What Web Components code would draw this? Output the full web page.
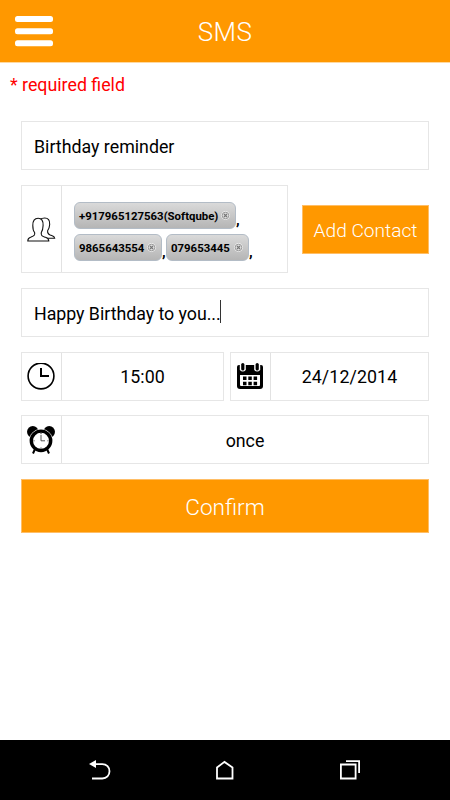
<!DOCTYPE html>
<html lang="en"><head><meta charset="utf-8"><title>SMS</title>
<style>html,body{margin:0;height:100%;background:#fff;overflow:hidden}</style></head>
<body><sms-app></sms-app>
<script>
const define=(name,html)=>{
  const t=document.createElement('template');t.innerHTML=html;
  customElements.define(name,class extends HTMLElement{
    constructor(){super();this.attachShadow({mode:'open'}).append(t.content.cloneNode(true));}
  });
};
define('app-bar',`<style>
:host{display:grid;grid-template-columns:1fr auto 1fr;align-items:center;background:#ff9800;border-bottom:1px solid #ffd9a0;box-sizing:border-box;height:63px;color:#fff;font-size:26px;font-weight:300}
svg{margin-left:14px;display:block}.t{letter-spacing:.4px;padding-top:1px}</style>
<svg width="40" height="62" viewBox="14 0 40 62" fill="#fff"><rect x="15" y="16" width="38" height="6" rx="2.5"/><rect x="15" y="28.2" width="38" height="6" rx="2.5"/><rect x="15" y="40.2" width="38" height="6" rx="2.5"/></svg>
<span class="t"><slot></slot></span><span></span>`);
define('field-box',`<style>
:host{display:flex;box-sizing:border-box;border:1.5px solid #e6e6e6;height:49px;min-width:0;font-size:17.8px;color:#000}
.i{width:39px;flex:none;border-right:1px solid #e2e2e2;display:grid;place-items:center start}
::slotted(svg){margin-left:5px}
:host([plain]) .i{display:none}
.b{flex:1;display:flex;align-items:center;justify-content:center;padding-top:2px}
:host([plain]) .b{justify-content:flex-start;padding-left:12px}
:host([tall]){height:88px}:host([tall]) .b{padding:5px 0 0 12px;justify-content:flex-start}
</style><div class="i"><slot name="icon"></slot></div><div class="b"><slot></slot></div>`);
define('action-button',`<style>
:host{display:flex;align-items:center;justify-content:center;box-sizing:border-box;background:#ff9800;border:1px solid #ffbe66;color:#fff;font-weight:300}
span{padding-top:2px}</style><span><slot></slot></span>`);
define('contact-chip',`<style>
:host{display:inline-flex;box-sizing:border-box;height:27px;align-items:center;justify-content:space-between;padding:0 5px 0 4px;border:1px solid #b3bcc6;border-radius:6px;background:linear-gradient(#dadada,#b5b5b5);font-size:11.4px;font-weight:700;color:#000}
span{padding-top:1px}svg{flex:none}</style><span><slot></slot></span>
<svg width="9" height="9" viewBox="0 0 9 9"><circle cx="4.5" cy="4.5" r="4.4" fill="#eee"/><circle cx="4.5" cy="4.5" r="3.3" fill="#ddd" stroke="#888" stroke-width=".8"/><path d="M3 3l3 3M6 3l-3 3" stroke="#777" stroke-width="1.1"/></svg>`);
define('nav-bar',`<style>
:host{display:flex;justify-content:space-between;align-items:center;height:60px;background:#000;padding:0 87px;box-sizing:border-box}
svg{display:block;fill:none;stroke:#fff;stroke-width:1.8}</style>
<svg width="26" height="24" viewBox="87 758 26 24"><path d="M92 778.5h10.3c4.3 0 7.2-3.1 7.2-7.2s-2.9-7.2-7.2-7.2H93"/><path d="M89 764l7-4v8z" fill="#fff" stroke="none"/></svg>
<svg width="26" height="24" viewBox="212 758 26 24"><path d="M217 778.5V767.5l7.5-5.6 8 5.6v11z"/></svg>
<svg width="26" height="24" viewBox="337 758 26 24"><path d="M340.9 764.5h14.7v14h-14.7zM346 761.2h13.1V773"/></svg>`);
define('sms-form',`<style>
:host{display:block;padding:9px 21px 0}
.req{margin-left:-11px;height:26px;line-height:26px;font-size:17.8px;color:#f00}
.grid{margin-top:23px;display:grid;grid-template-columns:minmax(0,1fr);row-gap:15px}
.r{display:flex;align-items:center}
.contacts{flex:none;width:267px}.add{width:127px;height:49px;margin-left:14px;font-size:19.1px}
.chips{display:grid;gap:5px;font-size:15px;font-weight:700}.line{display:flex;align-items:flex-end;height:27px}
.c{width:4px;line-height:20px;height:19px;overflow:visible}
.caret{width:1px;height:23px;background:#333;margin-left:-1px;margin-top:-4px}
.confirm{height:54px;font-size:22.6px}
svg{display:block}</style>
<div class="req">* required field</div>
<div class="grid">
<field-box plain><span>Birthday reminder</span></field-box>
<div class="r"><field-box tall class="contacts">
<svg slot="icon" width="30" height="28" viewBox="0 0 30 28" fill="#fff" stroke="#111" stroke-width="1.1"><path d="M13 4.5c1.3-1 3-1.500 4.700-1.500 3.500 0 5.200 2 5 6.500-.2 3-1 4.500-2 6-.5 2.500.3 3.500 2.500 4.500 2.500 1 4.300 1 4.500 3.300H14z"/><path d="M.8 26c0-2.300.8-3 2.700-3.700 3-1.200 4.900-1.700 4.100-4.800C6.300 16 5.800 13.500 5.800 10.500 5.600 5.800 7.600 3.200 11.100 3.200s5.300 2.600 5 7.300c-.1 3-.7 5.400-1.800 7-.8 3.100 1.200 3.700 4.100 4.800 2 .8 3.400 1.300 3.400 3.700z"/></svg>
<div class="chips"><div class="line"><contact-chip style="width:162px">+917965127563(Softqube)</contact-chip><span class="c">,</span></div>
<div class="line"><contact-chip style="width:88px">9865643554</contact-chip><span class="c">,</span><contact-chip style="width:83px">079653445</contact-chip><span class="c">,</span></div></div>
</field-box><action-button class="add">Add Contact</action-button></div>
<field-box plain><span style="letter-spacing:-.03px">Happy Birthday to you...</span><i class="caret"></i></field-box>
<div class="r" style="gap:6px"><field-box style="width:203px">
<svg slot="icon" width="28" height="28" viewBox="0 0 28 28" fill="none" stroke="#000"><circle cx="14" cy="13" r="12.9" stroke-width="1.6"/><path d="M14 5v8h8" stroke-width="2"/></svg><span style="margin-top:-2px">15:00</span></field-box>
<field-box style="flex:1"><svg slot="icon" width="28" height="28" viewBox="0 1 28 28"><path d="M1 5q0-2 2-2h22q2 0 2 2v19q0 3-3 3H4q-3 0-3-3z"/><path d="M4 13h20v10q0 1-1 1H5q-1 0-1-1z" fill="#fff"/><path d="M3.8 0h6v8q-3 3-6 0zM18.2 0h6v8q-3 3-6 0z" fill="#fff"/><rect x="5.2" y="1" width="3.2" height="7.5" rx="1.6"/><rect x="19.6" y="1" width="3.2" height="7.5" rx="1.6"/><path d="M7 14.5h3.5v3.5H7zM12.3 14.5h3.5v3.5h-3.5zM17.6 14.5h3.5v3.5h-3.5zM7 19.8h3.5v3.5H7zM12.3 19.8h3.5v3.5h-3.5zM17.6 19.8h3.5v3.5h-3.5z"/></svg><span style="margin-top:-2px;letter-spacing:.1px">24/12/2014</span></field-box></div>
<field-box style="margin-top:-1px"><svg slot="icon" width="28" height="28" viewBox="0 0 28 28"><circle cx="5.8" cy="5.8" r="5.8"/><circle cx="22.2" cy="5.8" r="5.8"/><circle cx="14" cy="14.8" r="11.9" fill="#fff"/><path d="M8 23l-2 4.5M20 23l2 4.5" stroke="#000" stroke-width="2"/><circle cx="14" cy="14.8" r="9.7" fill="#fff" stroke="#000" stroke-width="3.4"/><path d="M14 8.8v6h4" fill="none" stroke="#444" stroke-width=".9"/><path d="M14 7v1M14 21.5v1M6.5 14.8h1M20.5 14.8h1" stroke="#333"/></svg><span>once</span></field-box>
<action-button class="confirm">Confirm</action-button>
</div>`);
define('sms-app',`<style>:host{display:flex;flex-direction:column;height:800px;font-family:Roboto,"Liberation Sans",sans-serif;background:#fff}sms-form{flex:1}</style>
<app-bar>SMS</app-bar><sms-form></sms-form><nav-bar></nav-bar>`);
</script></body></html>
